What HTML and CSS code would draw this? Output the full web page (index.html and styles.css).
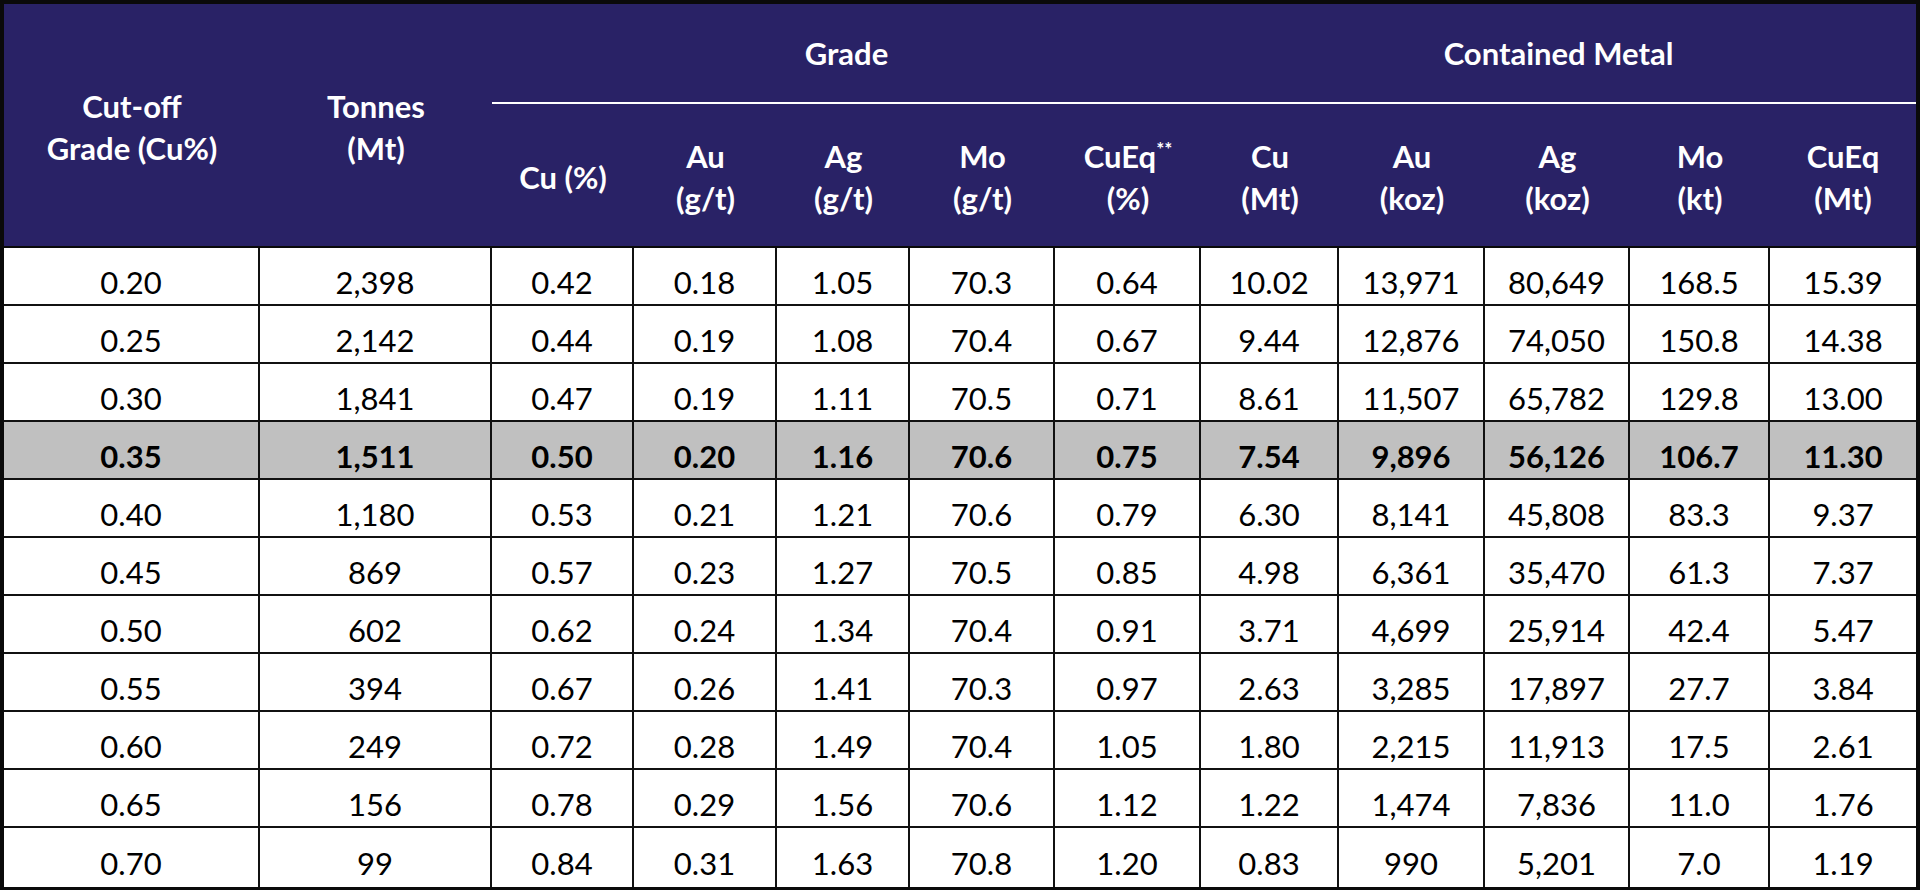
FILE: index.html
```html
<!DOCTYPE html>
<html>
<head>
<meta charset="utf-8">
<link rel="stylesheet" href="styles.css">
</head>
<body>
<table class="res">
  <colgroup>
    <col class="c1"><col class="c2"><col class="c3"><col class="c4"><col class="c5"><col class="c6">
    <col class="c7"><col class="c8"><col class="c9"><col class="c10"><col class="c11"><col class="c12">
  </colgroup>
  <thead>
    <tr class="h1">
      <th rowspan="2" class="hl">Cut-off<br>Grade (Cu%)</th>
      <th rowspan="2" class="hl">Tonnes<br>(Mt)</th>
      <th colspan="5" class="grp">Grade</th>
      <th colspan="5" class="grp">Contained Metal</th>
    </tr>
    <tr class="h2">
      <th>Cu (%)</th>
      <th>Au<br>(g/t)</th>
      <th>Ag<br>(g/t)</th>
      <th>Mo<br>(g/t)</th>
      <th>CuEq<sup>**</sup><br>(%)</th>
      <th>Cu<br>(Mt)</th>
      <th>Au<br>(koz)</th>
      <th>Ag<br>(koz)</th>
      <th>Mo<br>(kt)</th>
      <th>CuEq<br>(Mt)</th>
    </tr>
  </thead>
  <tbody>
    <tr><td>0.20</td><td>2,398</td><td>0.42</td><td>0.18</td><td>1.05</td><td>70.3</td><td>0.64</td><td>10.02</td><td>13,971</td><td>80,649</td><td>168.5</td><td>15.39</td></tr>
    <tr><td>0.25</td><td>2,142</td><td>0.44</td><td>0.19</td><td>1.08</td><td>70.4</td><td>0.67</td><td>9.44</td><td>12,876</td><td>74,050</td><td>150.8</td><td>14.38</td></tr>
    <tr><td>0.30</td><td>1,841</td><td>0.47</td><td>0.19</td><td>1.11</td><td>70.5</td><td>0.71</td><td>8.61</td><td>11,507</td><td>65,782</td><td>129.8</td><td>13.00</td></tr>
    <tr class="hi"><td>0.35</td><td>1,511</td><td>0.50</td><td>0.20</td><td>1.16</td><td>70.6</td><td>0.75</td><td>7.54</td><td>9,896</td><td>56,126</td><td>106.7</td><td>11.30</td></tr>
    <tr><td>0.40</td><td>1,180</td><td>0.53</td><td>0.21</td><td>1.21</td><td>70.6</td><td>0.79</td><td>6.30</td><td>8,141</td><td>45,808</td><td>83.3</td><td>9.37</td></tr>
    <tr><td>0.45</td><td>869</td><td>0.57</td><td>0.23</td><td>1.27</td><td>70.5</td><td>0.85</td><td>4.98</td><td>6,361</td><td>35,470</td><td>61.3</td><td>7.37</td></tr>
    <tr><td>0.50</td><td>602</td><td>0.62</td><td>0.24</td><td>1.34</td><td>70.4</td><td>0.91</td><td>3.71</td><td>4,699</td><td>25,914</td><td>42.4</td><td>5.47</td></tr>
    <tr><td>0.55</td><td>394</td><td>0.67</td><td>0.26</td><td>1.41</td><td>70.3</td><td>0.97</td><td>2.63</td><td>3,285</td><td>17,897</td><td>27.7</td><td>3.84</td></tr>
    <tr><td>0.60</td><td>249</td><td>0.72</td><td>0.28</td><td>1.49</td><td>70.4</td><td>1.05</td><td>1.80</td><td>2,215</td><td>11,913</td><td>17.5</td><td>2.61</td></tr>
    <tr><td>0.65</td><td>156</td><td>0.78</td><td>0.29</td><td>1.56</td><td>70.6</td><td>1.12</td><td>1.22</td><td>1,474</td><td>7,836</td><td>11.0</td><td>1.76</td></tr>
    <tr><td>0.70</td><td>99</td><td>0.84</td><td>0.31</td><td>1.63</td><td>70.8</td><td>1.20</td><td>0.83</td><td>990</td><td>5,201</td><td>7.0</td><td>1.19</td></tr>
  </tbody>
</table>
</body>
</html>
```
FILE: styles.css
```css
html, body {
  margin: 0;
  padding: 0;
  background: #ffffff;
}

.res {
  width: 1920px;
  table-layout: fixed;
  border-collapse: separate;
  border-spacing: 0;
  border: 4px solid #0a0a0a;
  border-bottom-width: 3px;
  font-family: Lato, "Liberation Sans", sans-serif;
  color: #000;
}

.c1 { width: 256px; }
.c2 { width: 232px; }
.c3 { width: 142px; }
.c4 { width: 143px; }
.c5 { width: 133px; }
.c6 { width: 145px; }
.c7 { width: 146px; }
.c8 { width: 138px; }
.c9 { width: 146px; }
.c10 { width: 145px; }
.c11 { width: 140px; }
.c12 { width: 146px; }

thead th {
  background: #292266;
  color: #ffffff;
  font-weight: 700;
  font-size: 31px;
  line-height: 42px;
  padding: 0;
  box-sizing: border-box;
  text-align: center;
  vertical-align: middle;
}

.h1 th.grp {
  height: 100px;
  border-bottom: 2px solid #ffffff;
}

.h1 th.hl {
  border-bottom: 2px solid #0a0a0a;
  padding-top: 4px;
}

.h2 th {
  height: 144px;
  border-bottom: 2px solid #0a0a0a;
  padding-top: 4px;
}

thead sup {
  font-size: 19px;
  line-height: 0;
  vertical-align: 12px;
}

tbody td {
  padding: 12px 0 0 0;
  box-sizing: border-box;
  height: 58.05px;
  font-size: 31px;
  line-height: 40px;
  text-align: center;
  vertical-align: middle;
  border-right: 2px solid #111111;
  border-bottom: 2px solid #111111;
}

tbody td:last-child {
  border-right: none;
}

tbody tr:last-child td {
  border-bottom: none;
}

tbody tr.hi td {
  background: #c0c0c0;
  font-weight: 700;
}
```
